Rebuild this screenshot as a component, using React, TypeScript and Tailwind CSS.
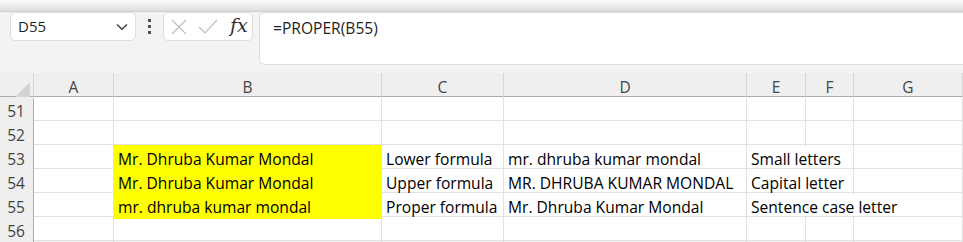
import React from 'react';

const cols = ['A', 'B', 'C', 'D', 'E', 'F', 'G'];

// noLine: column indexes whose right grid line is covered by overflowing text
const rows: { n: number; cells: string[]; fill?: boolean; noLine?: number[] }[] = [
    { n: 51, cells: ['', '', '', '', '', '', ''] },
    { n: 52, cells: ['', '', '', '', '', '', ''] },
    { n: 53, cells: ['', 'Mr. Dhruba Kumar Mondal', 'Lower formula', 'mr. dhruba kumar mondal', 'Small letters', '', ''], fill: true, noLine: [4] },
    { n: 54, cells: ['', 'Mr. Dhruba Kumar Mondal', 'Upper formula', 'MR. DHRUBA KUMAR MONDAL', 'Capital letter', '', ''], fill: true, noLine: [4] },
    { n: 55, cells: ['', 'mr. dhruba kumar mondal', 'Proper formula', 'Mr. Dhruba Kumar Mondal', 'Sentence case letter', '', ''], fill: true, noLine: [4, 5] },
    { n: 56, cells: ['', '', '', '', '', '', ''] },
];

const grid = 'grid grid-cols-[34px_80px_268px_122px_243px_59px_48px_1fr]';
const cellFont = "font-['Open_Sans','Liberation_Sans',sans-serif] text-[15.6px]";
const hdrFont = "font-['Open_Sans','Liberation_Sans',sans-serif] text-[15.5px]";

const FormulaBar: React.FC = () => (
    <div className="flex items-start pl-[10px] font-['Open_Sans','Noto_Sans',sans-serif]">
        <div className="w-[126px] h-[29px] bg-white border border-[#dedede] rounded-[5px] flex items-center justify-between pl-[7px] pr-[7px]">
            <span className="text-[15px] text-[#1f1f1f]">D55</span>
            <svg width="12" height="8" viewBox="0 0 12 8" fill="none" stroke="#3a3a3a" strokeWidth="1.4">
                <path d="M1 1.5 L6 6.3 L11 1.5" />
            </svg>
        </div>
        <div className="w-[27px] h-[29px] flex flex-col items-center justify-center gap-[3px]">
            <div className="w-[3px] h-[3px] bg-[#505050]" />
            <div className="w-[3px] h-[3px] bg-[#505050]" />
            <div className="w-[3px] h-[3px] bg-[#505050]" />
        </div>
        <div className="w-[90px] h-[29px] bg-white border border-[#dedede] rounded-[5px] flex items-center pl-[6px]">
            <svg width="18" height="18" viewBox="0 0 18 18" fill="none" stroke="#bdbdbd" strokeWidth="1.2">
                <path d="M2 2 L16 16 M16 2 L2 16" />
            </svg>
            <svg width="20" height="18" viewBox="0 0 20 18" fill="none" stroke="#bdbdbd" strokeWidth="1.2" className="ml-[10px]">
                <path d="M1 9 L7 15 L19 2" />
            </svg>
            <span className="ml-[12px] font-['DejaVu_Serif','Liberation_Serif',serif] italic text-[19px] leading-none text-[#2b2b2b] -mt-[3px]">fx</span>
        </div>
        <div className="flex-1 ml-[6px] h-[53px] bg-white border border-r-0 border-[#dedede] rounded-l-[6px] pl-[13px] pt-[3px]">
            <span className="text-[15.6px] text-[#1f1f1f]">=PROPER(B55)</span>
        </div>
    </div>
);

const App: React.FC = () => {
    return (
        <div className="w-[963px] h-[242px] overflow-hidden bg-[#f3f3f3]">
            <div className="h-[12px] bg-gradient-to-b from-[#fafafa] via-[#efefef] to-[#dcdcdc] border-b border-[#cfcfcf]" />
            <FormulaBar />
            <div className="mt-[8px]">
                <div className={`${grid} h-[24px] border-b border-[#ababab] bg-[#efefef]`}>
                    <div className="border-r border-[#d5d5d5] relative">
                        <div className="absolute right-[3px] bottom-[2px] w-0 h-0 border-l-[15px] border-l-transparent border-b-[15px] border-b-[#d3d3d3]" />
                    </div>
                    {cols.map((c) => (
                        <div key={c} className={`border-r border-[#d5d5d5] flex items-center justify-center pt-[3px] text-[#444] ${hdrFont}`}>
                            {c}
                        </div>
                    ))}
                </div>
                {rows.map((r) => (
                    <div key={r.n} className={`${grid} h-[24px] border-b border-[#e1e1e1] bg-white`}>
                        <div className={`bg-[#efefef] border-r border-[#ababab] flex items-center justify-center pr-[1px] pt-[3px] text-[#444] ${hdrFont}`}>
                            {r.n}
                        </div>
                        {r.cells.map((v, i) => (
                            <div
                                key={i}
                                className={`border-r ${r.noLine?.includes(i) ? 'border-transparent' : 'border-[#e1e1e1]'} flex items-center pl-[4px] pt-[3px] whitespace-nowrap overflow-visible min-w-0 text-black ${cellFont} ${
                                    r.fill && i === 1 ? 'bg-[#ffff00]' : ''
                                }`}
                            >
                                {v}
                            </div>
                        ))}
                    </div>
                ))}
            </div>
        </div>
    );
};

export default App;
